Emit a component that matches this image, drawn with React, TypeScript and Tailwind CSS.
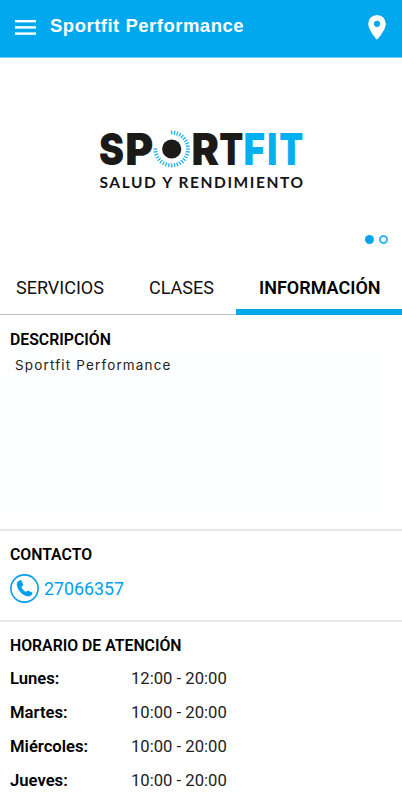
const ticks = Array.from({ length: 28 }, (_, i) => -90 + i * 10)

const hours = [
    { day: "Lunes:", time: "12:00 - 20:00" },
    { day: "Martes:", time: "10:00 - 20:00" },
    { day: "Miércoles:", time: "10:00 - 20:00" },
    { day: "Jueves:", time: "10:00 - 20:00" },
]

const letters = [
    { char: "S", x: 3, width: 25, fill: "#1b1a19" },
    { char: "P", x: 29.2, width: 28, fill: "#1b1a19" },
    { char: "R", x: 95.6, width: 27.6, fill: "#1b1a19" },
    { char: "T", x: 123.3, width: 24, fill: "#1b1a19" },
    { char: "F", x: 147.4, width: 21.5, fill: "#02b0f0" },
    { char: "I", x: 171.2, width: 10, fill: "#02b0f0" },
    { char: "T", x: 183.3, width: 24, fill: "#02b0f0" },
]

function Logo() {
    return (
        <svg width="214" height="84" viewBox="0 -14 214 84" role="img" aria-label="Sportfit">
            {letters.map((l) => (
                <text
                    key={l.x}
                    x={l.x}
                    y="37.3"
                    textLength={l.width}
                    lengthAdjust="spacingAndGlyphs"
                    fill={l.fill}
                    className="font-['Inter',sans-serif] text-[44.5px] font-black"
                >
                    {l.char}
                </text>
            ))}
            <circle cx="75.7" cy="21" r="9.6" fill="#1b1a19" />
            {ticks.map((a) => (
                <path
                    key={a}
                    d="M14.4 0H18.4"
                    stroke="#22b0ec"
                    strokeWidth="1.3"
                    transform={`translate(75.7 21) rotate(${a})`}
                />
            ))}
            <text x="3.5" y="59.5" textLength="203.5" fill="#151515" className="font-['Lato',sans-serif] text-[15.5px] font-bold">
                SALUD Y RENDIMIENTO
            </text>
        </svg>
    )
}

function PhoneIcon() {
    return (
        <svg width="29" height="29" viewBox="0 0 29 29" fill="none">
            <circle cx="14.5" cy="14.5" r="13.6" stroke="#079fe5" strokeWidth="1.6" />
            <path
                d="M10.2 6.2c.7-.3 1.200 0 1.500.7l1.300 3.300c.3.7 0 1.200-.6 1.700l-1 .8c.7 2.300 2.400 4.200 4.600 5.200l.9-.8c.6-.5 1.100-.6 1.800-.2l3.100 1.400c.7.4.9 1 .5 1.700-1 1.900-2.900 2.800-5 2.300C12 21 7.500 16 6.800 11c-.3-2.300 1-4.200 3.400-4.800Z"
                fill="#02a0ea"
            />
        </svg>
    )
}

export default function App() {
    return (
        <main className="h-[800px] w-[402px] overflow-hidden bg-white font-['Roboto',sans-serif] text-black">
            <header className="flex h-[58px] items-start border-b border-[#6ccbf5] bg-[#02a8ee] text-white">
                <svg className="ml-[15px] mt-[20px]" width="21" height="15" viewBox="0 0 21 15" fill="white">
                    <rect y="0" width="21" height="2.4" />
                    <rect y="6.2" width="21" height="2.4" />
                    <rect y="12.4" width="21" height="2.4" />
                </svg>
                <h1 className="ml-[14px] mt-[12px] font-['Liberation_Sans',sans-serif] text-[18.5px] font-bold leading-[28px] tracking-[0.5px]">
                    Sportfit Performance
                </h1>
                <svg className="ml-auto mr-[16px] mt-[15px]" width="18" height="25" viewBox="0 0 18 25">
                    <path
                        fill="white"
                        fillRule="evenodd"
                        d="M9 0a8.8 8.8 0 0 0-8.8 8.8C.2 15.2 9 24.800 9 24.800s8.800-9.600 8.800-16A8.800 8.800 0 0 0 9 0Zm0 5.700a3.100 3.100 0 1 1 0 6.200 3.100 3.100 0 0 1 0-6.200Z"
                    />
                </svg>
            </header>

            {/* Banner carousel */}
            <section className="flex h-[202px] flex-col pt-[56px]">
                <div className="ml-[96px] h-[84px]">
                    <Logo />
                </div>
                <div className="mr-[14px] mt-[37px] flex justify-end gap-[5px]">
                    <span className="size-[9px] rounded-full bg-[#02a4ea]" />
                    <span className="size-[9px] rounded-full border-2 border-[#35b5ee]" />
                </div>
            </section>

            <nav className="flex h-[55px] border-b border-[#bfc0c3] text-[18px] leading-[55px] text-[#111]">
                <span className="w-[149px] pl-[16px]">SERVICIOS</span>
                <span className="w-[87px]">CLASES</span>
                <span className="h-[55px] flex-1 border-b-[6px] border-[#02a4ea] pl-[23px] font-semibold text-black">INFORMACIÓN</span>
            </nav>

            <section className="h-[216px] border-b-2 border-[#e7e7ec] px-[10px] pt-[15px]">
                <h2 className="text-[15.8px] font-semibold leading-5">DESCRIPCIÓN</h2>
                <div className="-ml-[5px] mr-[3px] mt-[5px] h-[158px] bg-[#fdfeff] pl-[10px]">
                    <p className="font-['Inter',sans-serif] text-[13.5px] leading-5 tracking-[1.15px] text-[#222]">
                        Sportfit Performance
                    </p>
                </div>
            </section>

            <section className="h-[91px] border-b-2 border-[#e7e7ec] px-[10px] pt-[14px]">
                <h2 className="text-[15.8px] font-semibold leading-5">CONTACTO</h2>
                <div className="mt-[9px] flex items-center gap-[5px] text-[17.8px] text-[#02a0ea]">
                    <PhoneIcon />
                    <span className="pt-[2px]">27066357</span>
                </div>
            </section>

            <section className="px-[10px] pt-[14px]">
                <h2 className="text-[15.8px] font-semibold leading-5">HORARIO DE ATENCIÓN</h2>
                <dl className="mt-[6px] text-[16.65px] leading-[34px]">
                    {hours.map((h) => (
                        <div key={h.day} className="flex">
                            <dt className="w-[121px] font-semibold">{h.day}</dt>
                            <dd className="text-[#222]">{h.time}</dd>
                        </div>
                    ))}
                </dl>
            </section>
        </main>
    )
}
